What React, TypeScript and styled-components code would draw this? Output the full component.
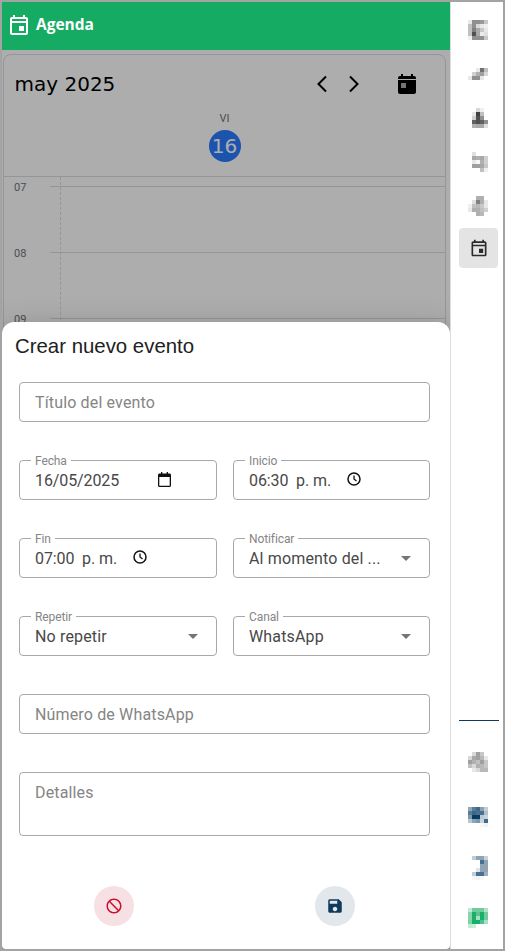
import React from "react";
import styled, { createGlobalStyle } from "styled-components";

const Global = createGlobalStyle`
  html, body { margin: 0; padding: 0; background: #fff; }
  * { box-sizing: border-box; }
  body { font-family: Roboto, "Liberation Sans", sans-serif; }
`;

const Frame = styled.div`
  width: 505px;
  height: 951px;
  border: 2px solid #a3a3a3;
  display: flex;
  overflow: hidden;
  background: #fff;
`;
const Main = styled.div`
  width: 448px;
  display: flex;
  flex-direction: column;
`;
const Header = styled.header`
  height: 48px;
  flex: none;
  background: #16ab63;
  color: #fff;
  display: flex;
  align-items: center;
  gap: 5px;
  padding: 0 0 2px 5px;
`;
const HeaderTitle = styled.h1`
  margin: 0 0 2px;
  font: 700 15.5px "Open Sans", sans-serif;
`;
const Body = styled.div`
  flex: 1;
  position: relative;
  overflow: hidden;
  padding: 4px 4px 0 1px;
`;
const Card = styled.section`
  height: 100%;
  border: 1px solid #dadce0;
  border-radius: 8px;
  display: flex;
  flex-direction: column;
`;
const CardHead = styled.div`
  height: 53px;
  flex: none;
  display: flex;
  align-items: center;
  padding: 4px 0 0 10.5px;
  color: #000;
`;
const Month = styled.h2`
  margin: 0;
  flex: 1;
  font: 400 20px "DejaVu Sans", sans-serif;
`;
const NavIcons = styled.div`
  display: flex;
  align-items: center;
  gap: 8px;
  margin-right: 32px;
`;
const TodayBox = styled.div`
  display: flex;
  margin-right: 29px;
`;
const DayHead = styled.div`
  height: 69px;
  flex: none;
  display: flex;
  flex-direction: column;
  align-items: center;
  padding-top: 4px;
  border-bottom: 1px solid #dadce0;
`;
const DayName = styled.span`
  font: 400 11px/14px Roboto, sans-serif;
  color: #70757a;
  margin-bottom: 4px;
`;
const DayBadge = styled.span`
  width: 32px;
  height: 32px;
  border-radius: 50%;
  background: #2a7bff;
  color: #fff;
  display: flex;
  align-items: center;
  justify-content: center;
  font: 400 20px "DejaVu Sans", sans-serif;
`;
const Grid = styled.div`
  flex: 1;
  position: relative;
  padding-top: 9px;
`;
const DayRule = styled.div`
  position: absolute;
  left: 56px;
  top: 0;
  bottom: 0;
  border-left: 1px dashed #dadce0;
`;
const Hour = styled.div`
  height: 66px;
  position: relative;
  margin-left: 46px;
  border-top: 1px solid #dadce0;
`;
const HourLabel = styled.span`
  position: absolute;
  left: -36px;
  top: -6px;
  font: 400 11px/14px Roboto, sans-serif;
  color: #70757a;
`;
const Overlay = styled.div`
  position: absolute;
  inset: 0;
  background: rgba(0, 0, 0, 0.32);
`;
const Sheet = styled.div`
  position: absolute;
  left: 0;
  right: 0;
  bottom: 0;
  height: 627px;
  background: #fff;
  border-radius: 12px 12px 4px 4px;
  box-shadow: 0 8px 10px -5px rgba(0, 0, 0, 0.2), 0 16px 24px 2px rgba(0, 0, 0, 0.14), 0 6px 30px 5px rgba(0, 0, 0, 0.12);
  padding: 10px 20px 0 17px;
`;
const SheetTitle = styled.h2`
  margin: 0 0 22px -4px;
  font: 400 20.4px/28px "Liberation Sans", Arial, sans-serif;
  color: #212121;
`;
const Form = styled.form`
  display: flex;
  flex-direction: column;
  gap: 38px;
`;
const Row = styled.div`
  display: grid;
  grid-template-columns: 198px 197px;
  gap: 16px;
`;
const Field = styled.div<{ $tall?: boolean }>`
  position: relative;
  height: ${(p) => (p.$tall ? 64 : 40)}px;
  border: 1px solid #a8a8a8;
  border-radius: 4px;
  display: flex;
  align-items: center;
  padding: 0 11px 0 15px;
  color: #484848;
  font-size: 16px;
  letter-spacing: 0.15px;
`;
const Legend = styled.label`
  position: absolute;
  left: 11px;
  top: -6px;
  padding: 0 4px;
  background: #fff;
  font-size: 12px;
  line-height: 13px;
  letter-spacing: -0.1px;
  color: #858585;
`;
const Input = styled.input`
  width: 100%;
  border: 0;
  padding: 0;
  outline: 0;
  background: none;
  font: inherit;
  letter-spacing: inherit;
  color: inherit;
  &::placeholder { color: #858585; opacity: 1; }
`;
const TextArea = styled.textarea`
  width: 100%;
  height: 100%;
  border: 0;
  padding: 10px 0 0;
  outline: 0;
  resize: none;
  background: none;
  font: inherit;
  letter-spacing: inherit;
  &::placeholder { color: #858585; opacity: 1; }
`;
const PickerText = styled.span<{ $width: number }>`
  width: ${(p) => p.$width}px;
  flex: none;
  white-space: pre;
  letter-spacing: -0.1px;
`;
const PickerIcon = styled.span`
  display: flex;
  margin-bottom: 2px;
`;
const SelectText = styled.span`
  flex: 1;
  white-space: nowrap;
`;
const Actions = styled.div`
  display: flex;
  gap: 181px;
  padding-left: 75px;
  margin-top: 50px;
`;
const RoundButton = styled.button<{ $bg: string; $fg: string }>`
  width: 40px;
  height: 40px;
  border: 0;
  border-radius: 50%;
  padding: 0;
  display: flex;
  align-items: center;
  justify-content: center;
  background: ${(p) => p.$bg};
  color: ${(p) => p.$fg};
`;
const Side = styled.nav`
  width: 53px;
  border-left: 1px solid #ddd;
  display: flex;
  flex-direction: column;
  padding: 6px 4px 11px 8px;
`;
const SideGroup = styled.div`
  display: flex;
  flex-direction: column;
  gap: 4px;
`;
const SideBottom = styled.div`
  margin-top: auto;
  display: flex;
  flex-direction: column;
  gap: 12px;
`;
const SideRule = styled.div`
  height: 1px;
  background: #0f3a5c;
  margin-bottom: 9px;
`;
const Tile = styled.div<{ $active?: boolean }>`
  width: 39px;
  height: 40px;
  border-radius: 4px;
  display: flex;
  align-items: center;
  justify-content: center;
  color: #2b2b2b;
  background: ${(p) => (p.$active ? "#e4e4e4" : "transparent")};
  svg { display: block; }
`;

type Cells = (string | null)[][];
const Mosaic = ({ rows, top }: { rows: Cells; top: number }) => (
  <svg width="39" height="40" viewBox="0 0 39 40" shapeRendering="crispEdges" aria-hidden="true">
    {rows.map((r, y) =>
      r.map((c, x) =>
        c ? <rect key={`${x}-${y}`} x={9 + x * 4} y={top + y * 4} width="4" height="4" fill={c} /> : null
      )
    )}
  </svg>
);

const topIcons: { top: number; rows: Cells }[] = [
  { top: 12, rows: [
    ["#e8e8e8", "#8f8f8f", "#8f8f8f", "#999", "#c8c8c8"],
    ["#c0c0c0", "#8f8f8f", "#d8d8d8", "#e8e8e8", "#f0f0f0"],
    ["#c0c0c0", "#808080", "#a8a8a8", "#c8c8c8", "#e8e8e8"],
    ["#c0c0c0", "#505050", "#a8a8a8", "#ececec", "#e0e0e0"],
    ["#f0f0f0", "#909090", "#909090", "#909090", "#c8c8c8"],
  ]},
  { top: 16, rows: [
    [null, null, "#e8e8e8", "#707070", "#c0c0c0"],
    [null, "#d0d0d0", "#b0b0b0", "#a0a0a0", "#d8d8d8"],
    ["#e8e8e8", "#909090", "#909090", "#e8e8e8", null],
  ]},
  { top: 12, rows: [
    [null, null, "#d8d8d8", "#f0f0f0", null],
    [null, "#e8e8e8", "#404040", "#c0c0c0", null],
    [null, "#d0d0d0", "#505050", "#909090", null],
    [null, "#606060", "#505050", "#606060", "#909090"],
    [null, "#b0b0b0", "#a8a8a8", "#a8a8a8", "#e0e0e0"],
  ]},
  { top: 12, rows: [
    [null, "#e0e0e0", null, null, null],
    [null, "#a8a8a8", "#b0b0b0", "#a8a8a8", "#d0d0d0"],
    [null, "#e8e8e8", "#f8f8f8", "#b0b0b0", "#d0d0d0"],
    [null, "#a0a0a0", "#a0a0a0", "#a8a8a8", "#c8c8c8"],
    [null, null, null, "#c0c0c0", "#f0f0f0"],
  ]},
  { top: 12, rows: [
    [null, null, "#b0b0b0", "#b0b0b0", null],
    [null, "#e0e0e0", "#808080", "#b0b0b0", "#e8e8e8"],
    ["#f0f0f0", "#c0c0c0", "#b8b8b8", "#c8c8c8", "#e8e8e8"],
    ["#e8e8e8", "#b0b0b0", "#b0b0b0", "#c0c0c0", "#d0d0d0"],
    [null, null, "#b0b0b0", "#b8b8b8", null],
  ]},
];
const bottomIcons: { top: number; rows: Cells }[] = [
  { top: 10, rows: [
    [null, "#d8d8d8", "#a0a0a0", "#c8c8c8", null],
    ["#d8d8d8", "#a8a8a8", "#a0a0a0", "#b8b8b8", "#e8e8e8"],
    ["#a0a0a0", "#b0b0b0", "#c0c0c0", "#a0a0a0", "#c8c8c8"],
    ["#c0c0c0", "#d8d8d8", "#b0b0b0", "#b8b8b8", "#c8c8c8"],
    [null, "#e8e8e8", "#d8d8d8", "#b8b8b8", "#b8b8b8"],
  ]},
  { top: 13, rows: [
    ["#90a8b8", "#5a7c98", "#3f6a8c", "#8aa0b4", "#c0d0d8"],
    ["#5a7c98", "#3a6688", "#4a7090", "#4a7090", "#b0c0cc"],
    ["#7a98ac", "#0c3a60", "#0c3a60", "#b8c8d4", "#c8d4dc"],
    ["#b8c8d4", "#8aa4b8", "#7a98ac", "#c8d4dc", "#3f6a8c"],
    [null, null, null, "#f8f8f8", "#eef2f4"],
  ]},
  { top: 10, rows: [
    [null, "#c0ccd8", "#90a4b4", "#90a4b4", "#c8d4dc"],
    [null, null, null, "#4a7090", "#90a4b4"],
    [null, null, null, "#90a4b4", "#90a4b4"],
    [null, null, "#dde4ea", "#90a4b4", "#90a4b4"],
    [null, "#c0ccd8", "#4a7090", "#4a7090", "#a0b0c0"],
    [null, "#f4f6f8", "#f0f4f4", "#f8f8f8", null],
  ]},
  { top: 10, rows: [
    ["#c0ead8", "#70cc9c", "#70cc9c", "#70cc9c", "#b0e4c8"],
    ["#88d4ac", "#1ab06a", "#60c090", "#1ab06a", "#70cc9c"],
    ["#88d4ac", "#1ab06a", "#a8e0c4", "#1ab06a", "#70cc9c"],
    ["#80d0a8", "#18b06a", "#18b06a", "#50c090", "#a8e0c4"],
    ["#c0ecd4", "#c8eedc", null, null, null],
  ]},
];

const EventOutline = ({ size }: { size: number }) => (
  <svg width={size} height={size} viewBox="0 0 24 24" fill="currentColor" aria-hidden="true">
    <path d="M19 4h-1V2h-2v2H8V2H6v2H5c-1.11 0-1.99.9-1.99 2L3 20c0 1.1.89 2 2 2h14c1.1 0 2-.9 2-2V6c0-1.1-.9-2-2-2zm0 16H5V10h14v10zm0-12H5V6h14v2zm-2 5h-5v5h5v-5z" />
  </svg>
);
const Chevron = ({ left }: { left?: boolean }) => (
  <svg width="24" height="24" viewBox="0 0 24 24" fill="none" stroke="#000" strokeWidth="2" aria-hidden="true">
    <path d={left ? "M16 4.5 8.5 12l7.5 7.5" : "M8 4.5 15.5 12 8 19.5"} />
  </svg>
);
const TodayIcon = () => (
  <svg width="18" height="20" viewBox="0 0 18 20" aria-hidden="true">
    <path d="M3 0h2v2h8V0h2v2h1c1.1 0 2 .9 2 2v1H0V4c0-1.1.9-2 2-2h1zM0 6h18v12c0 1.1-.9 2-2 2H2c-1.1 0-2-.9-2-2z" fill="#000" />
    <rect x="3" y="9" width="5" height="5" fill="#adadad" />
  </svg>
);
const DateIcon = () => (
  <PickerIcon>
    <svg width="13" height="15" viewBox="0 0 13 15" fill="#111" aria-hidden="true">
      <path d="M3 0h1.3v1.5h4.4V0H10v1.5h1.5c.8 0 1.5.7 1.5 1.5v10.500c0 .8-.7 1.500-1.500 1.500h-10C.7 15 0 14.300 0 13.500V3c0-.8.7-1.500 1.500-1.500H3zM1.300 5v8.700h10.400V5z" />
    </svg>
  </PickerIcon>
);
const ClockIcon = () => (
  <PickerIcon>
    <svg width="14" height="14" viewBox="0 0 14 14" fill="none" stroke="#111" strokeWidth="1.500" aria-hidden="true">
      <circle cx="7" cy="7" r="6" />
      <path d="M7 3.500V7l2.500 2" strokeWidth="1.300" />
    </svg>
  </PickerIcon>
);
const Arrow = () => (
  <svg width="24" height="24" viewBox="0 0 24 24" fill="#757575" aria-hidden="true">
    <path d="M7 10l5 5 5-5z" />
  </svg>
);
const BlockIcon = () => (
  <svg width="18" height="18" viewBox="0 0 24 24" fill="currentColor" aria-hidden="true">
    <path transform="matrix(-1 0 0 1 24 0)" d="M12 2C6.480 2 2 6.480 2 12s4.480 10 10 10 10-4.480 10-10S17.520 2 12 2zM4 12c0-4.420 3.580-8 8-8 1.850 0 3.550.63 4.900 1.690L5.690 16.900C4.630 15.550 4 13.850 4 12zm8 8c-1.850 0-3.550-.63-4.900-1.690L18.310 7.100C19.370 8.450 20 10.150 20 12c0 4.420-3.580 8-8 8z" />
  </svg>
);
const SaveIcon = () => (
  <svg width="18" height="18" viewBox="0 0 24 24" fill="currentColor" aria-hidden="true">
    <path d="M17 3H5c-1.110 0-2 .9-2 2v14c0 1.100.89 2 2 2h14c1.100 0 2-.9 2-2V7l-4-4zm-5 16c-1.660 0-3-1.340-3-3s1.340-3 3-3 3 1.340 3 3-1.340 3-3 3zm3-10H5V5h10v4z" />
  </svg>
);

export default function App() {
  return (
    <>
      <Global />
      <Frame>
        <Main>
          <Header>
            <EventOutline size={24} />
            <HeaderTitle>Agenda</HeaderTitle>
          </Header>
          <Body>
            <Card>
              <CardHead>
                <Month>may 2025</Month>
                <NavIcons>
                  <Chevron left />
                  <Chevron />
                </NavIcons>
                <TodayBox><TodayIcon /></TodayBox>
              </CardHead>
              <DayHead>
                <DayName>VI</DayName>
                <DayBadge>16</DayBadge>
              </DayHead>
              <Grid>
                <DayRule />
                {["07", "08", "09", "10"].map((h) => (
                  <Hour key={h}><HourLabel>{h}</HourLabel></Hour>
                ))}
              </Grid>
            </Card>
            <Overlay />
            <Sheet>
              <SheetTitle>Crear nuevo evento</SheetTitle>
              <Form>
                <Field><Input placeholder="Título del evento" /></Field>
                <Row>
                  <Field><Legend>Fecha</Legend><PickerText $width={123}>16/05/2025</PickerText><DateIcon /></Field>
                  <Field><Legend>Inicio</Legend><PickerText $width={98}>06:30  p. m.</PickerText><ClockIcon /></Field>
                </Row>
                <Row>
                  <Field><Legend>Fin</Legend><PickerText $width={98}>07:00  p. m.</PickerText><ClockIcon /></Field>
                  <Field><Legend>Notificar</Legend><SelectText>Al momento del ...</SelectText><Arrow /></Field>
                </Row>
                <Row>
                  <Field><Legend>Repetir</Legend><SelectText>No repetir</SelectText><Arrow /></Field>
                  <Field><Legend>Canal</Legend><SelectText>WhatsApp</SelectText><Arrow /></Field>
                </Row>
                <Field><Input placeholder="Número de WhatsApp" /></Field>
                <Field $tall><TextArea placeholder="Detalles" /></Field>
              </Form>
              <Actions>
                <RoundButton type="button" $bg="#f6e0e3" $fg="#c8102e" aria-label="Cancelar"><BlockIcon /></RoundButton>
                <RoundButton type="button" $bg="#e2e7eb" $fg="#0f3a5c" aria-label="Guardar"><SaveIcon /></RoundButton>
              </Actions>
            </Sheet>
          </Body>
        </Main>
        <Side>
          <SideGroup>
            {topIcons.map((ic, i) => (
              <Tile key={i}><Mosaic rows={ic.rows} top={ic.top} /></Tile>
            ))}
            <Tile $active><EventOutline size={20} /></Tile>
          </SideGroup>
          <SideBottom>
            <SideRule />
            {bottomIcons.map((ic, i) => (
              <Tile key={i}><Mosaic rows={ic.rows} top={ic.top} /></Tile>
            ))}
          </SideBottom>
        </Side>
      </Frame>
    </>
  );
}
